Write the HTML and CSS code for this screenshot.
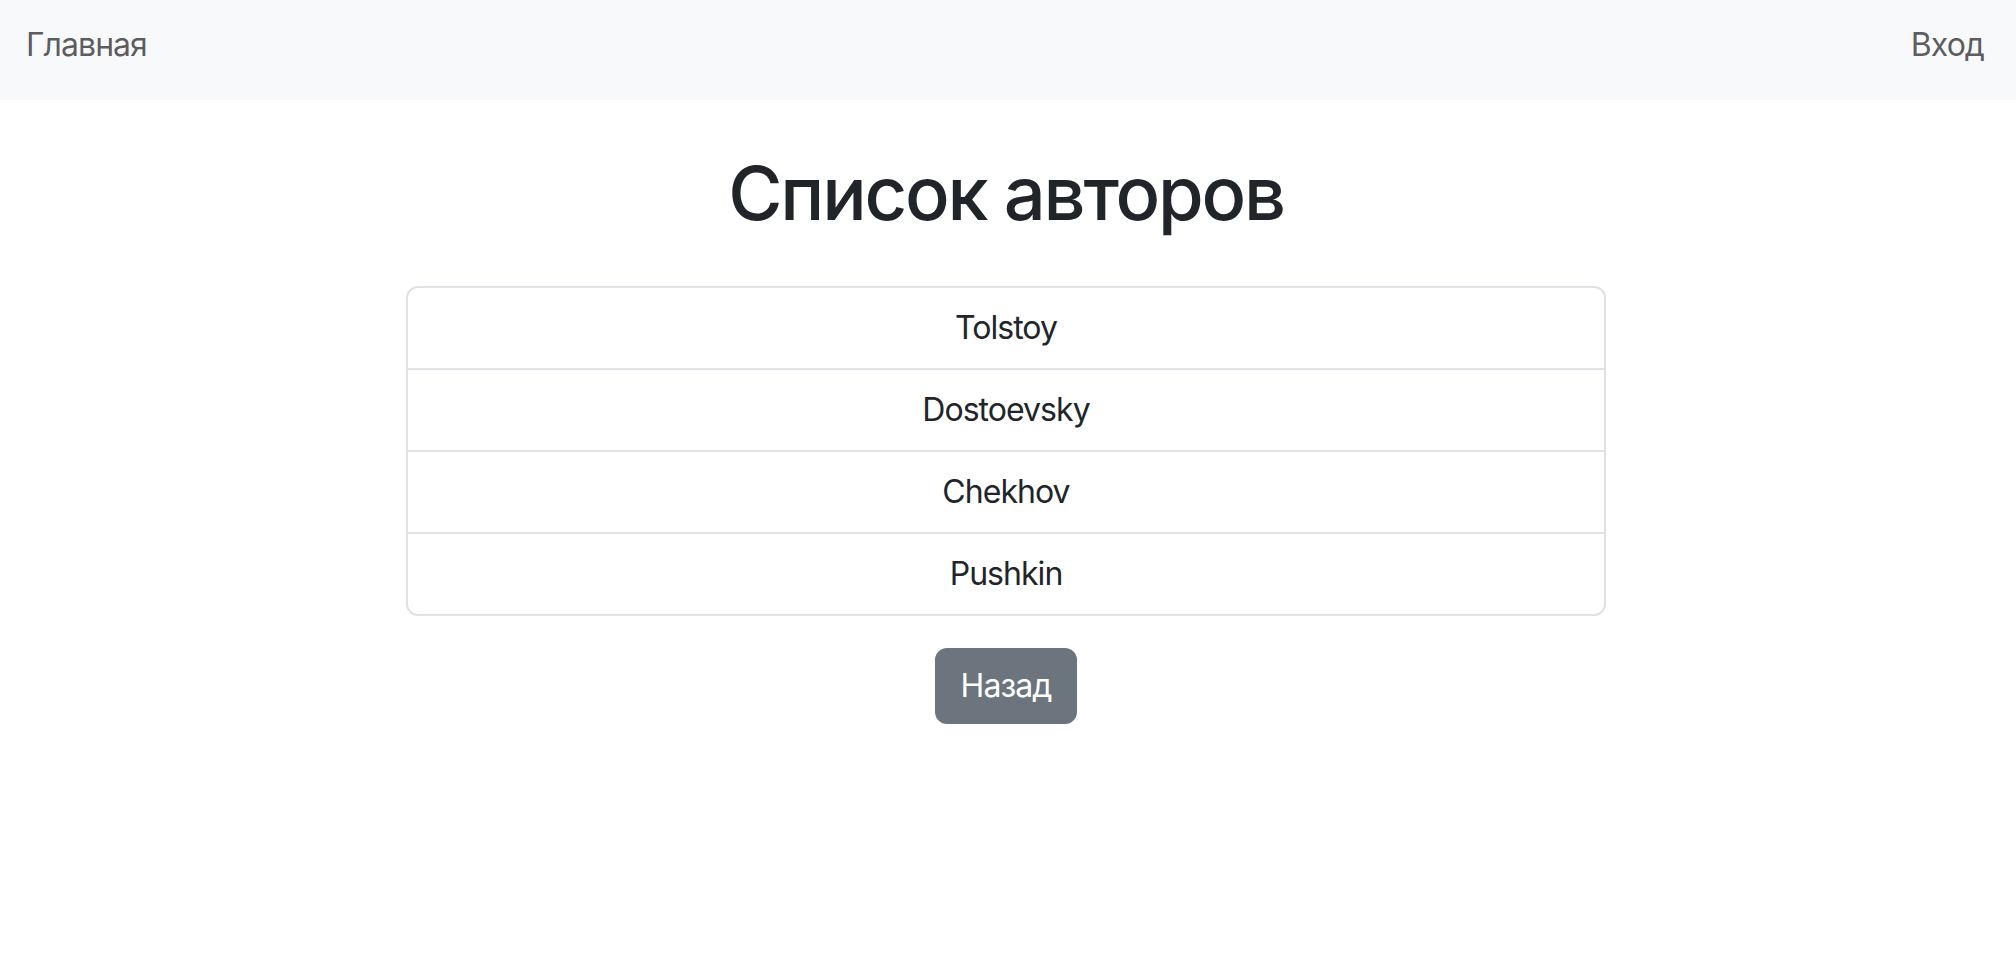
FILE: index.html
```html
<!DOCTYPE html>
<html lang="ru">
<head>
<meta charset="utf-8">
<title>Список авторов</title>
<link rel="stylesheet" href="styles.css">
</head>
<body>
<nav class="navbar">
  <a class="nav-link" href="#">Главная</a>
  <a class="nav-link" href="#">Вход</a>
</nav>
<main class="content">
  <h1 class="title">Список авторов</h1>
  <ul class="list">
    <li class="list-item">Tolstoy</li>
    <li class="list-item">Dostoevsky</li>
    <li class="list-item">Chekhov</li>
    <li class="list-item">Pushkin</li>
  </ul>
  <a class="btn" href="#">Назад</a>
</main>
</body>
</html>
```

FILE: styles.css
```css
* { box-sizing: border-box; }
html, body { margin: 0; padding: 0; }
body {
  font-family: Inter, "Noto Sans", "Liberation Sans", sans-serif;
  font-size: 32px;
  line-height: 48px;
  letter-spacing: -0.03em;
  color: #212529;
  background: #fff;
}
.navbar {
  height: 100px;
  background: #f8f9fa;
  display: flex;
  justify-content: space-between;
  align-items: flex-start;
  padding: 21px 32px 0 26px;
}
.nav-link {
  color: rgba(0, 0, 0, 0.65);
  text-decoration: none;
}
.content {
  display: flex;
  flex-direction: column;
  align-items: center;
  padding-right: 4px;
}
.title {
  margin: 49px 0 0;
  font-size: 74px;
  line-height: 89px;
  font-weight: 500;
  letter-spacing: -0.03em;
  color: #212529;
}
.list {
  list-style: none;
  margin: 48px 0 0;
  padding: 0;
  width: 1200px;
  border: 2px solid #dee2e6;
  border-radius: 12px;
}
.list-item {
  padding: 16px 32px;
  text-align: center;
}
.list-item + .list-item {
  border-top: 2px solid #dee2e6;
}
.btn {
  margin-top: 32px;
  display: inline-block;
  background: #6c757d;
  color: #fff;
  text-decoration: none;
  border: 2px solid #6c757d;
  border-radius: 12px;
  padding: 12px 24px;
  line-height: 48px;
}
```
